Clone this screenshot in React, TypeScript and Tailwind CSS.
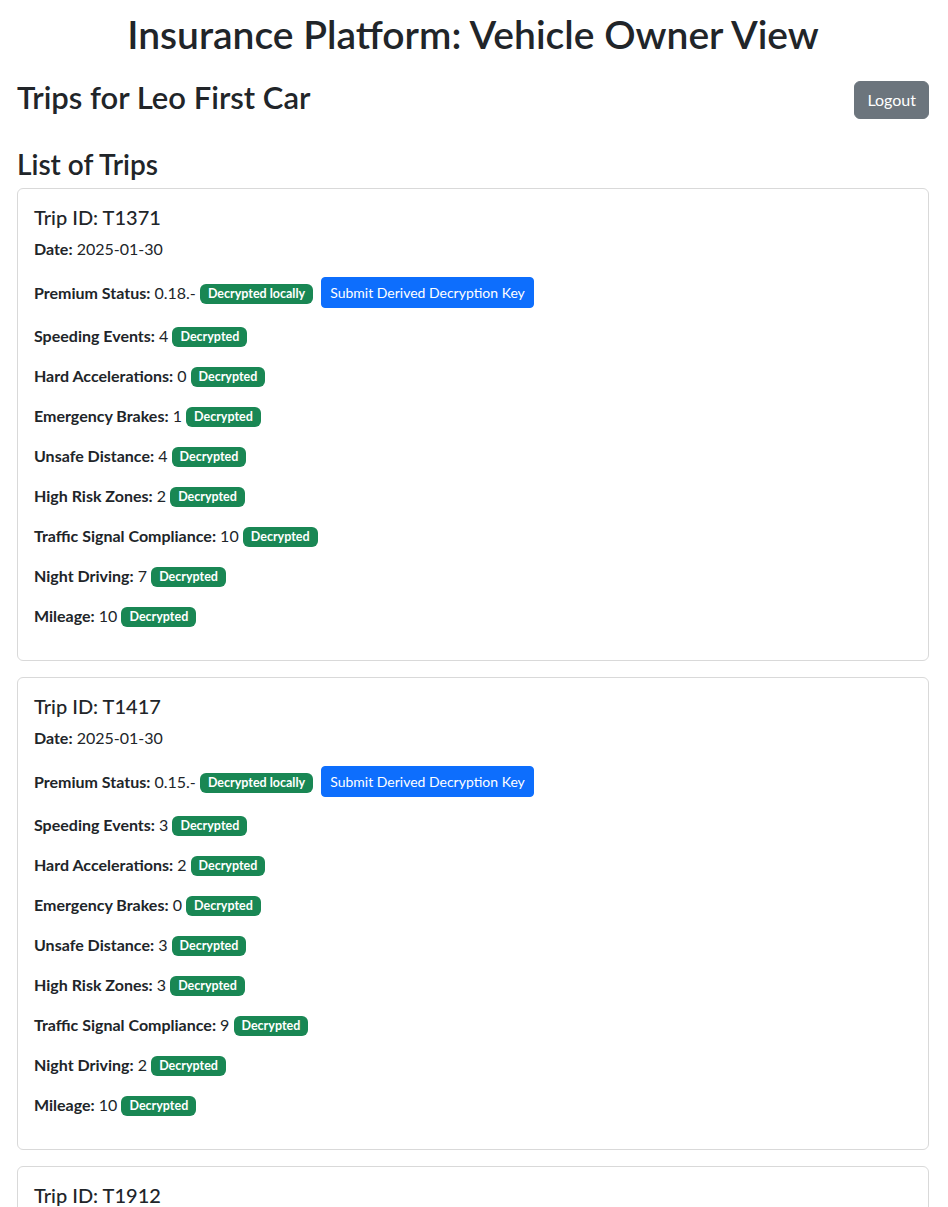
import React from "react";

interface Trip {
  id: string;
  date: string;
  premium: string;
  speeding: number;
  hardAcc: number;
  brakes: number;
  unsafe: number;
  risk: number;
  signal: number;
  night: number;
  mileage: number;
}

const trips: Trip[] = [
  { id: "T1371", date: "2025-01-30", premium: "0.18.-", speeding: 4, hardAcc: 0, brakes: 1, unsafe: 4, risk: 2, signal: 10, night: 7, mileage: 10 },
  { id: "T1417", date: "2025-01-30", premium: "0.15.-", speeding: 3, hardAcc: 2, brakes: 0, unsafe: 3, risk: 3, signal: 9, night: 2, mileage: 10 },
  { id: "T1912", date: "2025-01-30", premium: "0.12.-", speeding: 1, hardAcc: 1, brakes: 0, unsafe: 2, risk: 1, signal: 10, night: 0, mileage: 8 },
];

const Badge = ({ children }: { children: React.ReactNode }) => (
  <span className="inline-block bg-[#198754] text-white text-[12.5px] font-bold leading-[20px] h-[20px] px-[8px] rounded-[6px] align-[1px]">
    {children}
  </span>
);

const Row = ({ label, value }: { label: string; value: number }) => (
  <p className="mb-4 leading-6">
    <strong className="font-bold">{label}:</strong> {value} <Badge>Decrypted</Badge>
  </p>
);

const TripCard = ({ trip }: { trip: Trip }) => (
  <div className="border border-[#d9d9d9] rounded-[6px] p-4 mb-4">
    <h5 className="text-[20px] leading-6 font-medium mb-2">Trip ID: {trip.id}</h5>
    <p className="mb-4 leading-6">
      <strong className="font-bold">Date:</strong> {trip.date}
    </p>
    <div className="mb-4 flex items-center h-[31px]">
      <span>
        <strong className="font-bold">Premium Status:</strong> {trip.premium} <Badge>Decrypted locally</Badge>
      </span>
      <button className="ml-2 bg-[#0d6efd] text-white text-[14px] leading-[21px] px-2 py-1 rounded-[4px] border border-[#0d6efd]">
        Submit Derived Decryption Key
      </button>
    </div>
    <Row label="Speeding Events" value={trip.speeding} />
    <Row label="Hard Accelerations" value={trip.hardAcc} />
    <Row label="Emergency Brakes" value={trip.brakes} />
    <Row label="Unsafe Distance" value={trip.unsafe} />
    <Row label="High Risk Zones" value={trip.risk} />
    <Row label="Traffic Signal Compliance" value={trip.signal} />
    <Row label="Night Driving" value={trip.night} />
    <Row label="Mileage" value={trip.mileage} />
  </div>
);

export default function App() {
  return (
    <div
      className="bg-white text-[#212529] text-[16px] pl-[17px] pr-[19px] pt-[10px]"
      style={{ fontFamily: 'Lato, "Noto Sans", sans-serif' }}
    >
      <h1 className="text-center text-[39px] leading-[48px] font-semibold mb-[23px]">
        Insurance Platform: Vehicle Owner View
      </h1>
      <div className="flex justify-between items-start mb-[28px]">
        <h2 className="text-[31px] leading-[32px] font-semibold">Trips for Leo First Car</h2>
        <button className="bg-[#6c757d] text-white text-[16px] leading-6 px-3 py-[6px] rounded-[6px] border border-[#6c757d]">
          Logout
        </button>
      </div>
      <h3 className="text-[28px] leading-[34px] font-semibold mb-[7px]">List of Trips</h3>
      {trips.map((t) => (
        <TripCard key={t.id} trip={t} />
      ))}
    </div>
  );
}
